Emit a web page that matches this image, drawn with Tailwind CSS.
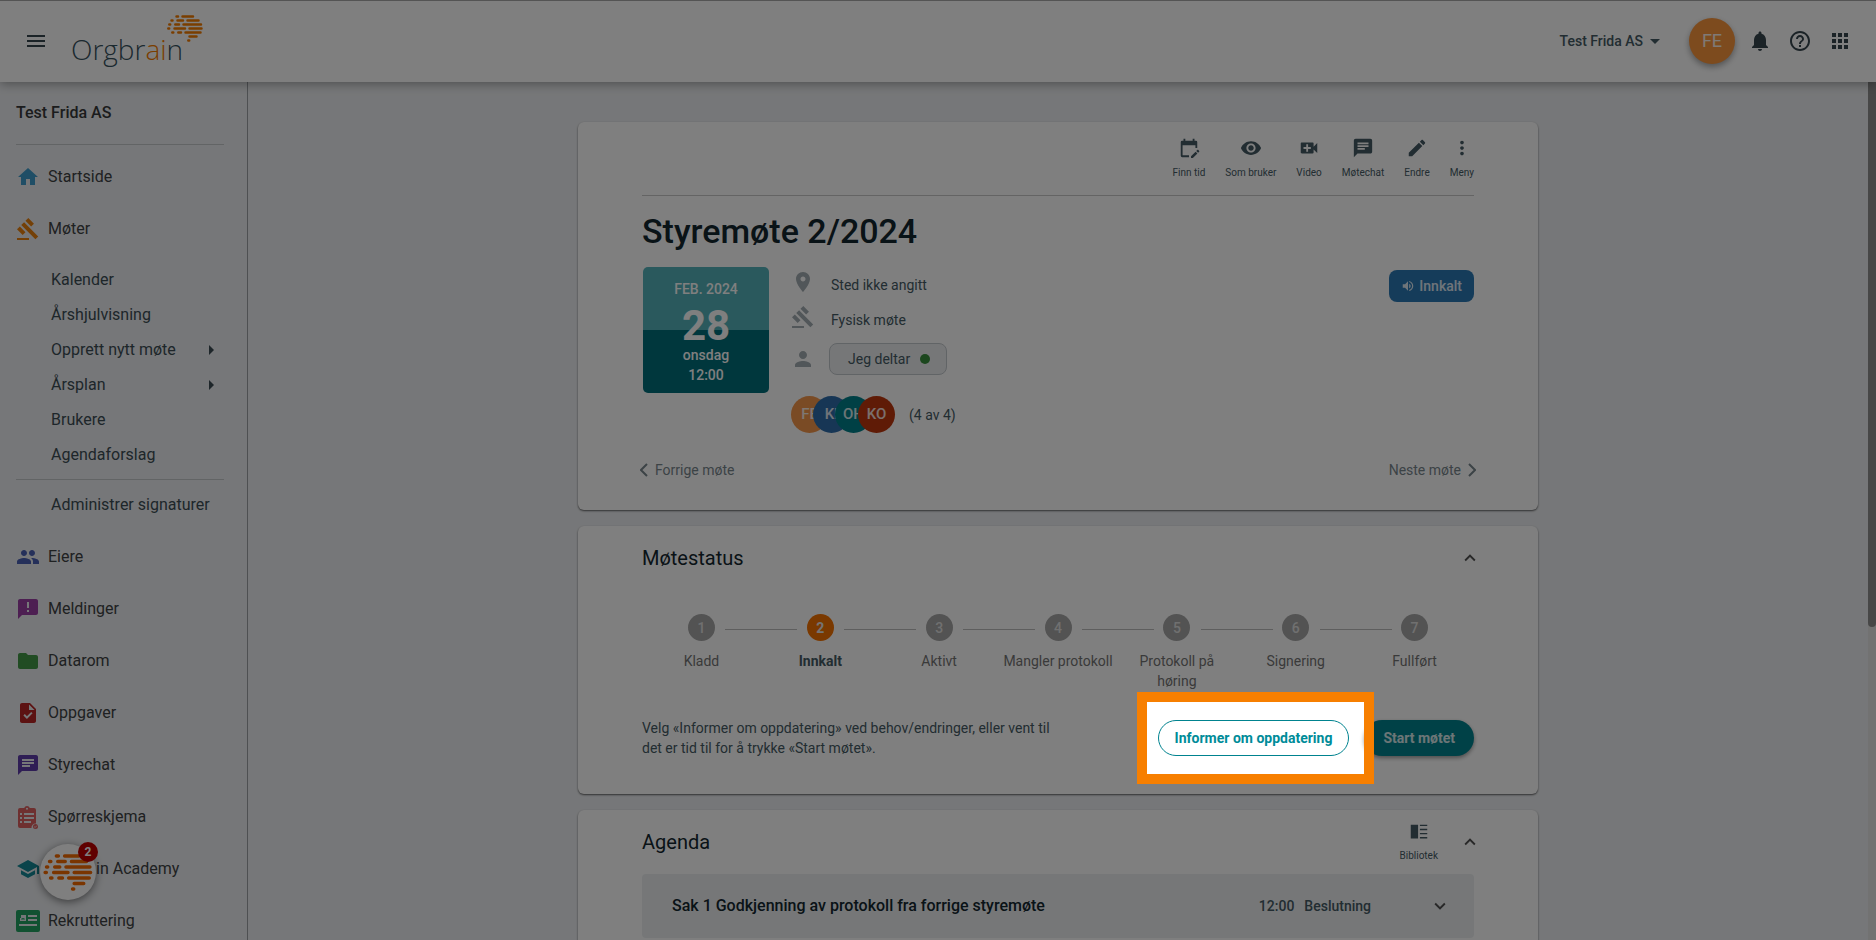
<!DOCTYPE html>
<html lang="no">
<head>
<meta charset="utf-8">
<meta name="viewport" content="width=device-width, initial-scale=1">
<title>Orgbrain – Styremøte 2/2024</title>
<script src="https://cdn.jsdelivr.net/npm/@tailwindcss/browser@4"></script>
</head>
<body class="flex h-screen flex-col overflow-hidden bg-[#edeff2] font-['Roboto',sans-serif] text-sm text-[#455a64]">

<svg class="hidden" aria-hidden="true">
  <symbol id="brain" viewBox="0 0 36 27">
    <g fill="none" stroke="currentColor" stroke-width="2.5" stroke-linecap="round">
      <path d="M9.5 1.5h1.5M15.500 1.500h10.500M4.500 5.500h1M10.500 5.500h5.500M20.500 5.500h11M2.300 9.500h.9M8.300 9.500h3.700M16.500 9.500h17.500M1.300 13.500h.9M7.500 13.500h10.500M22.500 13.500h12M5.300 17.500h1M11.300 17.500h2.700M18.500 17.500h15M22.500 21.500h7M21.300 25.500h.9"/>
    </g>
  </symbol>
  <symbol id="gavel" viewBox="0 0 24 24"><path d="M1 21h12v2H1zM5.245 8.070l2.830-2.827 14.140 14.142-2.828 2.828zM12.317 1l5.657 5.656-2.830 2.830-5.654-5.660zM3.825 9.485l5.657 5.657-2.828 2.828-5.657-5.657z"/></symbol>
  <symbol id="chat" viewBox="0 0 24 24"><path d="M20 2H4c-1.100 0-1.990.9-1.990 2L2 22l4-4h14c1.100 0 2-.9 2-2V4c0-1.100-.9-2-2-2zM6 9h12v2H6V9zm8 5H6v-2h8v2zm4-6H6V6h12v2z"/></symbol>
  <symbol id="up" viewBox="0 0 24 24"><path d="M12 8l-6 6 1.410 1.410L12 10.830l4.590 4.580L18 14z"/></symbol>
  <symbol id="down" viewBox="0 0 24 24"><path d="M16.590 8.590L12 13.170 7.410 8.590 6 10l6 6 6-6z"/></symbol>
  <symbol id="right" viewBox="0 0 24 24"><path d="M10 17l5-5-5-5v10z"/></symbol>
</svg>

<header class="relative z-10 flex h-[82px] shrink-0 items-center border-t border-[#a8a8a8] bg-white px-6 pb-[2px] shadow-[0_2px_10px_rgba(0,0,0,0.35)]">
  <button type="button" aria-label="Meny" class="text-[#37474f]">
    <svg class="size-6 fill-current" viewBox="0 0 24 24"><path d="M3 18h18v-2H3v2zm0-5h18v-2H3v2zm0-7v2h18V6H3z"/></svg>
  </button>
  <a href="#" aria-label="Orgbrain" class="relative ml-[23px] pt-4 font-['Open_Sans',sans-serif] text-[28px] leading-8 font-light text-[#37525e]">Orgbr<span class="text-[#f57c00]">ai</span>n
    <svg class="absolute -top-[2px] left-[96px] h-[27px] w-9 text-[#f57c00]"><use href="#brain"/></svg>
  </a>
  <div class="ml-auto flex items-center">
    <button type="button" class="flex items-center font-medium text-[#455a64]">Test Frida AS
      <svg class="size-6 fill-current" viewBox="0 0 24 24"><path d="M7 10l5 5 5-5z"/></svg>
    </button>
    <button type="button" class="ml-[22px] size-[46px] rounded-full bg-[#fb963c] text-lg text-white/90 shadow-[0_3px_6px_rgba(0,0,0,0.35)]">FE</button>
    <div class="ml-[13px] flex gap-4 text-[#37474f]">
      <button type="button" aria-label="Varsler"><svg class="size-6 fill-current" viewBox="0 0 24 24"><path d="M12 22c1.100 0 2-.9 2-2h-4c0 1.100.890 2 2 2zm6-6v-5c0-3.070-1.640-5.640-4.500-6.320V4c0-.830-.670-1.500-1.500-1.500s-1.500.670-1.500 1.500v.680C7.630 5.360 6 7.920 6 11v5l-2 2v1h16v-1l-2-2z"/></svg></button>
      <button type="button" aria-label="Hjelp"><svg class="size-6 fill-current" viewBox="0 0 24 24"><path d="M11 18h2v-2h-2v2zm1-16C6.480 2 2 6.480 2 12s4.480 10 10 10 10-4.480 10-10S17.520 2 12 2zm0 18c-4.410 0-8-3.590-8-8s3.590-8 8-8 8 3.590 8 8-3.590 8-8 8zm0-14c-2.210 0-4 1.790-4 4h2c0-1.100.9-2 2-2s2 .9 2 2c0 2-3 1.750-3 5h2c0-2.250 3-2.500 3-5 0-2.210-1.790-4-4-4z"/></svg></button>
      <button type="button" aria-label="Apper"><svg class="size-6 fill-current" viewBox="0 0 24 24"><path d="M4 8h4V4H4v4zm6 12h4v-4h-4v4zm-6 0h4v-4H4v4zm0-6h4v-4H4v4zm6 0h4v-4h-4v4zm6-10v4h4V4h-4zm-6 4h4V4h-4v4zm6 6h4v-4h-4v4zm0 6h4v-4h-4v4z"/></svg></button>
    </div>
  </div>
</header>

<div class="flex min-h-0 flex-1">
  <nav aria-label="Hovedmeny" class="w-62 shrink-0 border-r border-[#9ca1a5] pl-4 text-base text-[#3e4244]">
    <div class="mr-[23px] flex h-[63px] items-center border-b border-[#c5c8cb] font-medium text-[#37393b]">Test Frida AS</div>
    <div class="flex flex-col pt-[6px]">
      <a href="#" class="flex h-[52px] items-center gap-2"><svg class="size-6 fill-[#3f9dcc]" viewBox="0 0 24 24"><path d="M10 20v-6h4v6h5v-8h3L12 3 2 12h3v8z"/></svg>Startside</a>
      <a href="#" class="flex h-[52px] items-center gap-2"><svg class="size-6 fill-[#e8810e]"><use href="#gavel"/></svg>Møter</a>
      <div class="mr-[23px] flex flex-col pt-[7px] pb-[9px] text-[#3c4d55]">
        <a href="#" class="flex h-[35px] items-center pl-[35px]">Kalender</a>
        <a href="#" class="flex h-[35px] items-center pl-[35px]">Årshjulvisning</a>
        <a href="#" class="flex h-[35px] items-center justify-between pr-px pl-[35px]">Opprett nytt møte<svg class="size-6 fill-current"><use href="#right"/></svg></a>
        <a href="#" class="flex h-[35px] items-center justify-between pr-px pl-[35px]">Årsplan<svg class="size-6 fill-current"><use href="#right"/></svg></a>
        <a href="#" class="flex h-[35px] items-center pl-[35px]">Brukere</a>
        <a href="#" class="flex h-[35px] items-center pl-[35px]">Agendaforslag</a>
        <hr class="my-[7px] border-[#c5c8cb]">
        <a href="#" class="flex h-[35px] items-center pl-[35px]">Administrer signaturer</a>
      </div>
      <a href="#" class="flex h-[52px] items-center gap-2"><svg class="size-6 fill-[#4a60b4]" viewBox="0 0 24 24"><path d="M16 11c1.660 0 2.990-1.340 2.990-3S17.660 5 16 5s-3 1.340-3 3 1.340 3 3 3zm-8 0c1.660 0 2.990-1.340 2.990-3S9.660 5 8 5 5 6.340 5 8s1.340 3 3 3zm0 2c-2.330 0-7 1.170-7 3.500V19h14v-2.500c0-2.330-4.670-3.500-7-3.500zm8 0c-.290 0-.620.020-.970.050 1.160.840 1.970 1.970 1.970 3.450V19h6v-2.500c0-2.330-4.670-3.500-7-3.500z"/></svg>Eiere</a>
      <a href="#" class="flex h-[52px] items-center gap-2"><svg class="size-6 fill-[#9a3fa4]" viewBox="0 0 24 24"><path d="M20 2H4c-1.100 0-1.990.9-1.990 2L2 22l4-4h14c1.100 0 2-.9 2-2V4c0-1.100-.9-2-2-2zm-7 13h-2v-2h2v2zm0-4h-2V5h2v6z"/></svg>Meldinger</a>
      <a href="#" class="flex h-[52px] items-center gap-2"><svg class="size-6 fill-[#439847]" viewBox="0 0 24 24"><path d="M10 4H4c-1.100 0-1.990.9-1.990 2L2 18c0 1.100.9 2 2 2h16c1.100 0 2-.9 2-2V8c0-1.100-.9-2-2-2h-8l-2-2z"/></svg>Datarom</a>
      <a href="#" class="flex h-[52px] items-center gap-2"><svg class="size-6 fill-[#b92424]" viewBox="0 0 24 24"><path d="M14 2H6c-1.100 0-1.990.9-1.990 2L4 20c0 1.100.890 2 1.990 2H18c1.100 0 2-.9 2-2V8l-6-6zm-3.060 16L7.400 14.460l1.410-1.410 2.120 2.120 4.240-4.240 1.410 1.410L10.940 18zM13 9V3.500L18.500 9H13z"/></svg>Oppgaver</a>
      <a href="#" class="flex h-[52px] items-center gap-2"><svg class="size-6 fill-[#5e3cab]"><use href="#chat"/></svg>Styrechat</a>
      <a href="#" class="flex h-[52px] items-center gap-2"><svg class="size-6" viewBox="0 0 24 24"><path fill="#dc6060" fill-rule="evenodd" d="M18 3h-4.200a3 3 0 0 0-5.600 0H4a2 2 0 0 0-2 2v16a2 2 0 0 0 2 2h11.500a4 4 0 0 1 4.500-4.500V5a2 2 0 0 0-2-2zM11 2.800a1 1 0 1 1 0 2 1 1 0 0 1 0-2zM4 8h2v2H4zm4 0h10v2H8zm-4 4h2v2H4zm4 0h10v2H8zm-4 4h2v2H4zm4 0h7v2H8z"/><circle cx="19.500" cy="21.500" r="2.500" fill="#dc6060"/><path d="M18.200 21.600l1 .9 1.700-1.900" fill="none" stroke="#edeff2" stroke-width=".8"/></svg>Spørreskjema</a>
      <a href="#" class="flex h-[52px] items-center gap-2"><svg class="size-6 fill-[#148896]" viewBox="0 0 24 24"><path d="M5 13.180v4L12 21l7-3.820v-4L12 17l-7-3.820zM12 3L1 9l11 6 9-4.910V17h2V9L12 3z"/></svg>Orgbrain Academy</a>
      <a href="#" class="flex h-[52px] items-center gap-2"><svg class="size-6" viewBox="0 0 24 24"><rect y="1" width="24" height="22" rx="2" fill="#23a263"/><path fill="#edeff2" d="M4 6h6v6H4zM12 6h9v2h-9zM12 10h9v2h-9zM3 15h18v2H3z"/><path fill="#23a263" d="M5 10.500a2 1.500 0 0 1 4 0zM4 6h1v3H4z"/></svg>Rekruttering</a>
    </div>
  </nav>

  <main class="flex min-w-0 flex-1 flex-col items-center gap-4 px-4 pt-10">
    <section class="w-full max-w-[960px] shrink-0 rounded-md bg-white px-16 pt-[15px] pb-[30px] shadow-[0_1px_2px_rgba(0,0,0,0.6)]">
      <div class="flex justify-end gap-5 border-b border-[#c9c9c9] pb-4 text-[10px] leading-3">
        <button type="button" class="flex flex-col items-center gap-2"><svg class="size-[22px] fill-current" viewBox="0 0 24 24"><path d="M18 2h-2v2H8V2H6v2H4.500A1.500 1.500 0 0 0 3 5.500V20.500A1.500 1.500 0 0 0 4.500 22H12v-2H5V9h14v3h2V5.500A1.500 1.500 0 0 0 19.500 4H18zM21.200 14l-1.300 1.300 2 2 1.200-1.300a.6.600 0 0 0 0-.8L22 14a.6.600 0 0 0-.8 0zM19.200 16l-5 5v2h2l5-5z"/></svg>Finn tid</button>
        <button type="button" class="flex flex-col items-center gap-2"><svg class="size-[22px] fill-current" viewBox="0 0 24 24"><path d="M12 4.500C7 4.500 2.730 7.610 1 12c1.730 4.390 6 7.500 11 7.500s9.270-3.110 11-7.500c-1.730-4.390-6-7.500-11-7.500zM12 17c-2.760 0-5-2.240-5-5s2.240-5 5-5 5 2.240 5 5-2.240 5-5 5zm0-8c-1.660 0-3 1.340-3 3s1.340 3 3 3 3-1.340 3-3-1.340-3-3-3z"/></svg>Som bruker</button>
        <button type="button" class="flex flex-col items-center gap-2"><svg class="size-[22px] fill-current" viewBox="0 0 24 24"><path d="M17 10.500V7c0-.550-.450-1-1-1H4c-.550 0-1 .450-1 1v10c0 .550.450 1 1 1h12c.550 0 1-.450 1-1v-3.500l4 4v-11l-4 4zM14 13h-3v3H9v-3H6v-2h3V8h2v3h3v2z"/></svg>Video</button>
        <button type="button" class="flex flex-col items-center gap-2"><svg class="size-[22px] fill-current"><use href="#chat"/></svg>Møtechat</button>
        <button type="button" class="flex flex-col items-center gap-2"><svg class="size-[22px] fill-current" viewBox="0 0 24 24"><path d="M3 17.250V21h3.750L17.810 9.940l-3.750-3.750L3 17.250zM20.710 7.040c.390-.390.390-1.020 0-1.410l-2.340-2.340c-.390-.390-1.020-.390-1.410 0l-1.830 1.830 3.750 3.750 1.830-1.830z"/></svg>Endre</button>
        <button type="button" class="flex flex-col items-center gap-2"><svg class="size-[22px] fill-current" viewBox="0 0 24 24"><path d="M12 8c1.100 0 2-.9 2-2s-.9-2-2-2-2 .9-2 2 .9 2 2 2zm0 2c-1.100 0-2 .9-2 2s.9 2 2 2 2-.9 2-2-.9-2-2-2zm0 6c-1.100 0-2 .9-2 2s.9 2 2 2 2-.9 2-2-.9-2-2-2z"/></svg>Meny</button>
      </div>
      <h1 class="mt-[15px] text-[34px] leading-10 font-medium text-[#13262e]">Styremøte 2/2024</h1>
      <div class="mt-4 flex items-start pl-px">
        <div class="flex size-[126px] flex-col items-center rounded-[5px] bg-linear-to-b from-[#54b2ba] from-50% to-[#006e7b] to-50% pt-3 font-medium text-white">
          <span class="leading-5">FEB. 2024</span>
          <span class="mt-1 text-[42px] leading-[46px] font-bold">28</span>
          <span class="mt-[-4px] leading-5">onsdag</span>
          <span class="leading-5">12:00</span>
        </div>
        <div class="ml-[22px] flex flex-col pt-[3px]">
          <div class="flex h-[35px] items-start gap-4"><svg class="size-6 fill-[#a3adb2]" viewBox="0 0 24 24"><path d="M12 2C8.130 2 5 5.130 5 9c0 5.250 7 13 7 13s7-7.750 7-13c0-3.870-3.130-7-7-7zm0 9.500c-1.380 0-2.500-1.120-2.500-2.500s1.120-2.500 2.500-2.500 2.500 1.120 2.500 2.500-1.120 2.500-2.500 2.500z"/></svg><span class="pt-[5px]">Sted ikke angitt</span></div>
          <div class="flex h-[35px] items-start gap-4"><svg class="size-6 fill-[#a3adb2]"><use href="#gavel"/></svg><span class="pt-[5px]">Fysisk møte</span></div>
          <div class="mt-[3px] flex h-8 items-center gap-4"><svg class="size-6 fill-[#a3adb2]" viewBox="0 0 24 24"><path d="M12 12c2.210 0 4-1.790 4-4s-1.790-4-4-4-4 1.790-4 4 1.790 4 4 4zm0 2c-2.670 0-8 1.340-8 4v2h16v-2c0-2.660-5.330-4-8-4z"/></svg>
            <button type="button" class="-ml-[2px] flex h-8 items-center gap-[10px] rounded-lg border border-[#c3c8cc] bg-[#eceff1] pr-4 pl-[18px]">Jeg deltar<span class="size-[10px] rounded-full bg-[#388e3c]"></span></button>
          </div>
          <div class="mt-[21px] flex items-center text-[15px] font-medium text-white/85">
            <span class="flex size-[37px] items-center justify-center rounded-full bg-[#f4964a]">FE</span>
            <span class="-ml-[15px] flex size-[37px] items-center justify-center rounded-full bg-[#2e6dab]">KI</span>
            <span class="-ml-[15px] flex size-[37px] items-center justify-center rounded-full bg-[#00808a]">OH</span>
            <span class="-ml-[14px] flex size-[37px] items-center justify-center rounded-full bg-[#bf360c]">KO</span>
            <span class="ml-[14px] text-sm font-normal text-[#455a64]">(4 av 4)</span>
          </div>
        </div>
        <button type="button" class="mt-[3px] ml-auto flex h-8 items-center gap-1 rounded-lg bg-[#2b79b5] px-3 font-medium text-white/85"><svg class="size-[14px] fill-current" viewBox="0 0 24 24"><path d="M3 9v6h4l5 5V4L7 9H3zm13.500 3c0-1.770-1.020-3.290-2.500-4.030v8.050c1.480-.730 2.500-2.250 2.500-4.020zM14 3.230v2.060c2.890.860 5 3.540 5 6.710s-2.110 5.850-5 6.710v2.060c4.010-.910 7-4.490 7-8.770s-2.990-7.860-7-8.770z"/></svg>Innkalt</button>
      </div>
      <div class="mt-[27px] flex justify-between text-[#78868d]">
        <a href="#" class="-ml-[2px] flex items-center gap-[7px]"><svg class="h-[14px] w-2 fill-none stroke-current stroke-2" viewBox="0 0 8 14"><path d="M7 1L1 7l6 6"/></svg>Forrige møte</a>
        <a href="#" class="-mr-[2px] flex items-center gap-[7px]">Neste møte<svg class="h-[14px] w-2 fill-none stroke-current stroke-2" viewBox="0 0 8 14"><path d="M1 1l6 6-6 6"/></svg></a>
      </div>
    </section>

    <section class="w-full max-w-[960px] shrink-0 rounded-md bg-white px-16 pt-[18px] pb-9 shadow-[0_1px_2px_rgba(0,0,0,0.6)]">
      <div class="flex items-center justify-between">
        <h2 class="text-xl text-[#13262e]">Møtestatus</h2>
        <button type="button" aria-label="Skjul møtestatus" class="-mr-[7px]"><svg class="size-[22px] fill-[#505050]"><use href="#up"/></svg></button>
      </div>
      <ol class="mt-[42px] flex text-center text-[#757575]">
        <li class="relative flex flex-1 flex-col items-center gap-[10px]"><span class="flex size-[27px] items-center justify-center rounded-full bg-[#a6a6a6] font-medium text-[#e0e0e0]">1</span><span>Kladd</span><i class="absolute top-[15px] left-[calc(50%+24px)] h-px w-[calc(100%-47px)] bg-[#bdbdbd]"></i></li>
        <li class="relative flex flex-1 flex-col items-center gap-[10px]" aria-current="step"><span class="flex size-[27px] items-center justify-center rounded-full bg-[#f57200] font-bold text-[#e8e8e8]">2</span><span class="font-bold text-[#455a64]">Innkalt</span><i class="absolute top-[15px] left-[calc(50%+24px)] h-px w-[calc(100%-47px)] bg-[#bdbdbd]"></i></li>
        <li class="relative flex flex-1 flex-col items-center gap-[10px]"><span class="flex size-[27px] items-center justify-center rounded-full bg-[#a6a6a6] font-medium text-[#e0e0e0]">3</span><span>Aktivt</span><i class="absolute top-[15px] left-[calc(50%+24px)] h-px w-[calc(100%-47px)] bg-[#bdbdbd]"></i></li>
        <li class="relative flex flex-1 flex-col items-center gap-[10px]"><span class="flex size-[27px] items-center justify-center rounded-full bg-[#a6a6a6] font-medium text-[#e0e0e0]">4</span><span>Mangler protokoll</span><i class="absolute top-[15px] left-[calc(50%+24px)] h-px w-[calc(100%-47px)] bg-[#bdbdbd]"></i></li>
        <li class="relative flex flex-1 flex-col items-center gap-[10px]"><span class="flex size-[27px] items-center justify-center rounded-full bg-[#a6a6a6] font-medium text-[#e0e0e0]">5</span><span class="px-5">Protokoll på høring</span><i class="absolute top-[15px] left-[calc(50%+24px)] h-px w-[calc(100%-47px)] bg-[#bdbdbd]"></i></li>
        <li class="relative flex flex-1 flex-col items-center gap-[10px]"><span class="flex size-[27px] items-center justify-center rounded-full bg-[#a6a6a6] font-medium text-[#e0e0e0]">6</span><span>Signering</span><i class="absolute top-[15px] left-[calc(50%+24px)] h-px w-[calc(100%-47px)] bg-[#bdbdbd]"></i></li>
        <li class="flex flex-1 flex-col items-center gap-[10px]"><span class="flex size-[27px] items-center justify-center rounded-full bg-[#a6a6a6] font-medium text-[#e0e0e0]">7</span><span>Fullført</span></li>
      </ol>
      <div class="mt-[27px] flex items-center justify-between">
        <p class="max-w-[416px]">Velg «Informer om oppdatering» ved behov/endringer, eller vent til det er tid til for å trykke «Start møtet».</p>
        <div class="flex gap-[15px]">
          <div class="relative">
            <button type="button" class="h-9 rounded-full border border-[#00838f] bg-white px-4 font-bold text-[#008c99]">Informer om oppdatering</button>
            <!-- Guide spotlight: frames the button and dims the rest of the window -->
            <div class="pointer-events-none absolute -top-7 -right-[25px] -bottom-7 -left-[21px] z-50 border-10 border-[#f77f00] shadow-[0_0_0_9999px_rgba(0,0,0,0.5)]"></div>
          </div>
          <button type="button" class="h-9 rounded-full bg-[#00838f] px-[19px] font-bold text-white/85 shadow-[0_2px_4px_rgba(0,0,0,0.4)]">Start møtet</button>
        </div>
      </div>
    </section>

    <section class="w-full max-w-[960px] shrink-0 rounded-md bg-white px-16 pt-[11px] pb-8 shadow-[0_1px_2px_rgba(0,0,0,0.6)]">
      <div class="flex items-center">
        <h2 class="text-xl text-[#13262e]">Agenda</h2>
        <button type="button" class="mr-[21px] ml-auto flex flex-col items-center gap-[7px] text-[10px] leading-3"><svg class="size-[22px] fill-current" viewBox="0 0 24 24"><path d="M3 4h8v15H3zM13 4h8v1.500h-8zM13 8.500h8V10h-8zM13 13h8v1.500h-8zM13 17.500h8V19h-8z"/></svg>Bibliotek</button>
        <button type="button" aria-label="Skjul agenda" class="-mr-[7px]"><svg class="size-[22px] fill-[#505050]"><use href="#up"/></svg></button>
      </div>
      <article class="mt-3 flex h-16 items-center rounded bg-[#eceff1] pr-[23px] pl-[30px] font-medium">
        <h3 class="text-base text-[#13262e]">Sak 1 Godkjenning av protokoll fra forrige styremøte</h3>
        <span class="ml-auto">12:00</span><span class="ml-[10px]">Beslutning</span>
        <button type="button" aria-label="Vis sak 1" class="ml-[58px]"><svg class="size-[22px] fill-[#505050]"><use href="#down"/></svg></button>
      </article>
    </section>
  </main>

  <div class="h-full w-2 shrink-0 bg-[#e4e4e4]"><div class="h-[545px] rounded-b bg-[#8f8f8f]"></div></div>
</div>

<button type="button" aria-label="Åpne chat, 2 uleste" class="fixed bottom-10 left-10 z-10 flex size-14 items-center justify-center rounded-full bg-white text-[#f56a00] shadow-[0_2px_8px_rgba(0,0,0,0.5)]">
  <svg class="h-[37px] w-[50px]"><use href="#brain"/></svg>
  <span class="absolute -top-[2px] -right-[2px] flex size-5 items-center justify-center rounded-full bg-[#c00000] text-xs font-bold text-white">2</span>
</button>
</body>
</html>
